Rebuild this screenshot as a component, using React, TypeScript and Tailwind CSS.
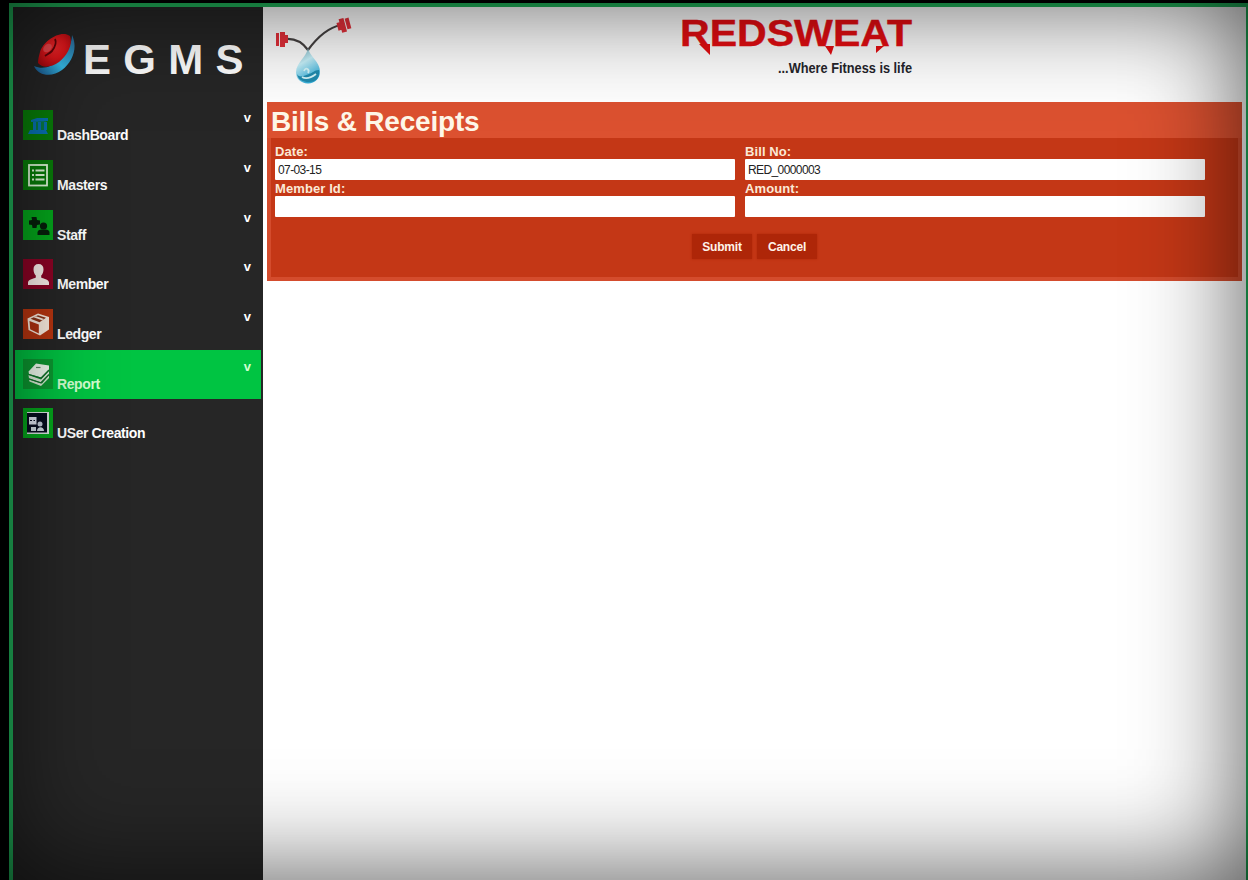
import React from 'react';

function BuildingIcon() {
  return (
    <svg viewBox="0 0 30 30" className="h-[30px] w-[30px]">
      <g fill="#0872b4">
        <path d="M8 10 L14 8 L25 8 L25 11 L8 12Z" />
        <path d="M10 12h3v8h-3zM15 12h3v8h-3zM21 12h3v8h-3z" />
        <path d="M7 20h16l2 4H5z" />
        <path d="M11 10h12v12H11z" opacity=".35" />
      </g>
    </svg>
  );
}

function ListIcon() {
  return (
    <svg viewBox="0 0 30 30" className="h-[30px] w-[30px]" fill="none" stroke="#e4fadc">
      <rect x="6" y="5" width="18" height="20.5" strokeWidth="1.8" />
      <path d="M12.5 10.5h9M12.5 15h9M12.5 19.5h9M9 10.5h2M9 15h2M9 19.5h2" strokeWidth="1.8" />
    </svg>
  );
}

function StaffIcon() {
  return (
    <svg viewBox="0 0 30 30" className="h-[30px] w-[30px]" fill="#06200b">
      <path d="M8.5 7h5l.5 3 3 .5v4l-3 .5-.5 3h-4l-.5-3-3-.5v-4l3-.5z" />
      <circle cx="20.5" cy="16" r="3.6" />
      <path d="M14.5 25v-2.500c0-2 2-3 4-3h4c2 0 4 1 4 3V25z" />
    </svg>
  );
}

function MemberIcon() {
  return (
    <svg viewBox="0 0 30 30" className="h-[30px] w-[30px]" fill="#fff4ef">
      <path d="M15.500 5c3.200 0 5 2 5 5.200 0 2.800-1 5-2.300 6.300v2c1.500 1.200 7.800 1.800 7.800 5v2.500H5V23.500c0-3.200 6.300-3.800 7.800-5v-2c-1.300-1.300-2.300-3.500-2.300-6.300C10.500 7 12.300 5 15.500 5z" />
    </svg>
  );
}

function BoxIcon() {
  return (
    <svg viewBox="0 0 30 30" className="h-[30px] w-[30px]">
      <path d="M4.500 9.500 15 4.500l11 3.500v12.500L17 26.500 5.500 21z" fill="#fff1e4" />
      <path d="M6.500 12 15.800 15.500v9L7.200 20.300z" fill="#b2320f" />
      <path d="M7.500 9.800 15 6.300l8 2.500-6.500 4.400z" fill="#8f3417" />
      <path d="M10.500 8.300 19 11.300l2-1.200-8-2.800z" fill="#fff1e4" />
    </svg>
  );
}

function BooksIcon() {
  return (
    <svg viewBox="0 0 30 30" className="h-[30px] w-[30px]" strokeLinejoin="round">
      <path d="M6 20.500 19 24.500 26 16v3L18 27 6.500 22.500z" fill="#dcefd8" />
      <path d="M5.500 16 18 20.500 26 12v3.500l-8 8L6 19.300z" fill="#e3f2df" />
      <path d="M5.500 12.500 13 4.500 26 6.500v4L18 18.500 6 15z" fill="#f4fff2" />
      <path d="M6 15.500 18 19.200 26 11M6 20 18 23.800 26 15.500" fill="none" stroke="#16712e" strokeWidth="1.3" />
      <path d="M13 8.500h4.500" stroke="#5e8e68" strokeWidth="1.200" />
    </svg>
  );
}

function UserCreationIcon() {
  return (
    <svg viewBox="0 0 30 30" className="h-[30px] w-[30px]">
      <path d="M4 4h22v22H4z" fill="#dce8e4" />
      <path d="M4 5h20v19.500H4z" fill="#080d20" />
      <path d="M6 9h7.500v7.500H6z" fill="#e3e8f4" />
      <path d="M7 12.500h2M10.500 12.500h1.500" stroke="#080d20" />
      <circle cx="17" cy="16" r="2.500" fill="#c9d2df" />
      <path d="M8 19h5v4H8zM14 23c0-5 7-5 7 0z" fill="#d6e1e8" />
    </svg>
  );
}

const menu = [
  { label: 'DashBoard', tile: 'bg-[#087d08]', Icon: BuildingIcon, arrow: true, active: false },
  { label: 'Masters', tile: 'bg-[#087d08]', Icon: ListIcon, arrow: true, active: false },
  { label: 'Staff', tile: 'bg-[#04a81c]', Icon: StaffIcon, arrow: true, active: false },
  { label: 'Member', tile: 'bg-[#8d0325]', Icon: MemberIcon, arrow: true, active: false },
  { label: 'Ledger', tile: 'bg-[#b93610]', Icon: BoxIcon, arrow: true, active: false },
  { label: 'Report', tile: 'bg-[#0c9a31]', Icon: BooksIcon, arrow: true, active: true },
  { label: 'USer Creation', tile: 'bg-[#04a81c]', Icon: UserCreationIcon, arrow: false, active: false },
];

function SphereLogo() {
  return (
    <svg viewBox="0 0 44 46" className="h-[46px] w-[44px]">
      <defs>
        <linearGradient id="ring" x1="0" y1="1" x2="1" y2="0">
          <stop offset="0" stopColor="#174d89" />
          <stop offset=".45" stopColor="#38c4f2" />
          <stop offset="1" stopColor="#2a689b" />
        </linearGradient>
        <radialGradient id="ball" cx=".5" cy=".4" r=".65">
          <stop offset="0" stopColor="#ff2a2d" />
          <stop offset=".5" stopColor="#ee171c" />
          <stop offset="1" stopColor="#b50a10" />
        </radialGradient>
      </defs>
      <path d="M39 3c6 12 1 27-10 35-9 7-23 7-28-4 9 4 18 1 25-7C34 20 39 12 39 3z" fill="url(#ring)" />
      <path d="M37 4c3 8-2 19-11 26C18 36 9 36 5 31c0-4 1-7 2-11C10 9 28-3 37 4z" fill="url(#ball)" />
      <path d="M22 7c2 4 0 8-3 12-2 2-4 3-7 5" fill="none" stroke="#650408" strokeWidth="1.800" />
      <ellipse cx="14.500" cy="16" rx="5" ry="3.500" fill="#fb6b72" opacity=".6" transform="rotate(-45 14.500 16)" />
    </svg>
  );
}

function DropLogo() {
  return (
    <svg viewBox="0 0 80 70" className="h-[70px] w-[80px]">
      <defs>
        <linearGradient id="drop" x1="0" y1="0" x2=".4" y2="1">
          <stop offset="0" stopColor="#78adbc" />
          <stop offset=".45" stopColor="#c9f3fc" />
          <stop offset="1" stopColor="#33add9" />
        </linearGradient>
      </defs>
      <path d="M10 24c10-1 18 4 23 11C41 24 51 13 66 10" fill="none" stroke="#464242" strokeWidth="2.200" />
      <g fill="#e5303a">
        <path d="M1 18h3v13H1zM5 17h5v15H5zM10 20h3v8h-3z" />
        <g transform="rotate(-15 69 9)">
          <path d="M62 6h3v8h-3zM65 3h5v14h-5zM71 4h4v11h-4z" />
        </g>
      </g>
      <path d="M33 34c1 8 12 15 12 25 0 8-5 13-12 13s-12-5-12-12c0-10 11-17 12-26z" fill="url(#drop)" transform="translate(0 1.500) scale(1 .93)" />
      <path d="M22 59c3 5 8 1 12 0s5-4 10-4c1 9-4 12-10 12s-11-2-12-8z" fill="#218caf" />
      <path d="M29 56c2-5 6-1 4 2M27 62c5 3 10 0 14-3" fill="none" stroke="#d5f6fa" strokeWidth="1.800" />
    </svg>
  );
}

function BrandLogo() {
  return (
    <svg viewBox="0 0 240 76" className="h-[76px] w-[240px] overflow-visible">
      <text x="3" y="31" textLength="232" lengthAdjust="spacingAndGlyphs" fill="#e80d12" stroke="#e80d12" strokeWidth=".4" fontFamily="Liberation Sans, sans-serif" fontWeight="700" fontSize="37">REDSWEAT</text>
      <g fill="#e80d12">
        <path d="M22 29h11v11zM148 31h9l-3 9zM199 31h8l-8 7z" />
      </g>
      <text x="101" y="58" textLength="134" lengthAdjust="spacingAndGlyphs" fill="#25252b" fontFamily="Liberation Sans, sans-serif" fontWeight="700" fontSize="15.5">...Where Fitness is life</text>
    </svg>
  );
}

function Field({ label, value }: { label: string; value: string }) {
  return (
    <label className="flex w-[460px] flex-col text-[13px] font-bold leading-[17px] tracking-[0.1px] text-[#fbe9d6]">
      <span className="h-[15px] whitespace-nowrap">{label}</span>
      <input
        type="text"
        defaultValue={value}
        className="mt-px h-[21px] w-[460px] rounded-[1px] bg-white px-[3px] font-['Liberation_Sans',sans-serif] text-[12px] font-normal tracking-[-0.6px] text-[#222] outline-none"
      />
    </label>
  );
}

export default function App() {
  return (
    <div className="relative h-[880px] w-[1248px] overflow-hidden bg-black pl-[9px] pt-[3px] font-['Liberation_Sans',Arial,sans-serif]">
      <div className="flex h-[877px] w-[1239px] border-l-4 border-r-2 border-t-4 border-[#21b45b] bg-white">
        <aside className="flex w-[250px] shrink-0 flex-col bg-[#262626]">
          <div className="flex h-[94.15px] shrink-0 items-start pl-5 pt-[25px]">
            <SphereLogo />
            <span className="ml-[6px] mt-[7px] whitespace-nowrap text-[42px] font-bold leading-[42px] tracking-[0.3px] text-white">E G M S</span>
          </div>
          <nav className="flex flex-col pl-[2px] pr-[2px]">
            {menu.map(({ label, tile, Icon, arrow, active }) => (
              <a key={label} className={`flex h-[49.7px] items-start pl-2 pt-[9px] ${active ? 'bg-[#00c442] text-[#d2ffd0]' : 'text-white'}`}>
                <span className={`h-[30px] w-[30px] shrink-0 ${tile}`}>
                  <Icon />
                </span>
                <span className="ml-1 mt-[17px] flex-1 whitespace-nowrap text-[14px] font-bold leading-4 tracking-[-0.4px]">{label}</span>
                {arrow && <span className="mr-[10px] text-[13px] font-bold leading-4">v</span>}
              </a>
            ))}
          </nav>
        </aside>
        <main className="flex min-w-0 flex-1 flex-col">
          <header className="flex h-[95px] shrink-0 items-start pl-3 pt-2">
            <DropLogo />
            <div className="ml-[322px]">
              <BrandLogo />
            </div>
          </header>
          <section className="ml-1 mr-1 h-[179px] shrink-0 border-b-4 border-l-4 border-r-4 border-[#d44c2d] bg-[#c43716]">
            <h1 className="-mx-1 h-9 bg-[#dc5130] pl-1 pt-1 text-[28px] font-bold leading-8 tracking-[-0.2px] text-[#fff8e9]">Bills &amp; Receipts</h1>
            <form className="flex flex-col pt-[5px]" onSubmit={(e) => e.preventDefault()}>
              <div className="grid w-[930px] grid-cols-[460px_460px] gap-x-[10px] pl-1">
                <Field label="Date:" value="07-03-15" />
                <Field label="Bill No:" value="RED_0000003" />
                <Field label="Member Id:" value="" />
                <Field label="Amount:" value="" />
              </div>
              <div className="mt-[17px] flex gap-[5px] pl-[421px] text-[12px] font-bold tracking-[-0.2px] text-[#fff3e9]">
                <button type="submit" className="h-[25px] w-[60px] bg-[#ae2608] shadow-[0_0_2px_#ae2608]">Submit</button>
                <button type="button" className="h-[25px] w-[60px] bg-[#ae2608] shadow-[0_0_2px_#ae2608]">Cancel</button>
              </div>
            </form>
          </section>
        </main>
      </div>
      <div className="pointer-events-none absolute inset-0 shadow-[inset_0_0_110px_rgba(0,0,0,0.7)]" />
    </div>
  );
}
